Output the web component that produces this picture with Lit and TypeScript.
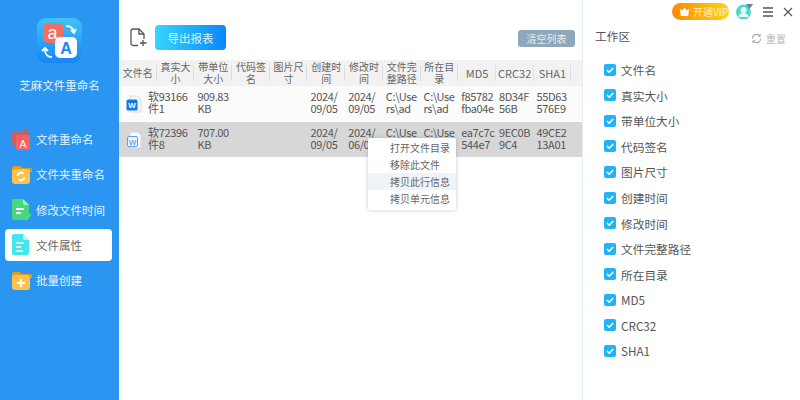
import { LitElement, html, css, svg } from "lit";
import { customElement } from "lit/decorators.js";

const headers = ["文件名","真实大小","带单位大小","代码签名","图片尺寸","创建时间","修改时间","文件完整路径","所在目录","MD5","CRC32","SHA1",""];
const rows = [
  { cls: "", name: "软93166\n件1", cells: ["909.83\nKB","","","2024/\n09/05","2024/\n09/05","C:\\Use\nrs\\ad","C:\\Use\nrs\\ad","f85782\nfba04e","8D34F\n56B","55D63\n576E9",""] },
  { cls: "sel", name: "软72396\n件8", cells: ["707.00\nKB","","","2024/\n09/05","2024/\n06/05","C:\\Use\nrs\\ad","C:\\Use\nrs\\ad","ea7c7c\n544e7","9EC0B\n9C4","49CE2\n13A01",""] },
];
const fields = ["文件名","真实大小","带单位大小","代码签名","图片尺寸","创建时间","修改时间","文件完整路径","所在目录","MD5","CRC32","SHA1"];

const navIcons = [
  svg`<rect x="1" y="3" width="15" height="15" rx="2" fill="#c9605f"/><path d="M11 2a6 6 0 0 1 7 4" stroke="#c9605f" fill="none" stroke-width="1.2"/><rect x="5" y="7" width="14" height="15" rx="2" fill="#f9615d"/><text x="12" y="20" font-size="11" fill="#fff" text-anchor="middle" font-family="Liberation Sans">A</text>`,
  svg`<path d="M1 5a2 2 0 0 1 2-2h6l2 2h8a2 2 0 0 1 2 2v2H1z" fill="#e89a1d"/><rect x="1" y="6" width="18" height="15" rx="3" fill="#ffc24a"/><path d="M6.500 13a3.500 3.500 0 0 1 6-2.400M13.500 14a3.500 3.500 0 0 1-6 2.400" stroke="#fff" stroke-width="1.800" fill="none"/>`,
  svg`<path d="M3 1h9l6 6v13a2 2 0 0 1-2 2H3a2 2 0 0 1-2-2V3a2 2 0 0 1 2-2z" fill="#47d77f"/><path d="M12 1l6 6h-4a2 2 0 0 1-2-2z" fill="#a5efc2"/><path d="M5 11h8M5 15h5" stroke="#fff" stroke-width="1.800"/><path d="M14 22l6-6" stroke="#4fd888" stroke-width="2"/>`,
  svg`<path d="M3 1h9l6 6v13a2 2 0 0 1-2 2H3a2 2 0 0 1-2-2V3a2 2 0 0 1 2-2z" fill="#43e6ee"/><path d="M12 1l6 6h-4a2 2 0 0 1-2-2z" fill="#b5f6f8"/><path d="M5 10h8M5 14h5M5 18h7" stroke="#fff" stroke-width="1.700"/>`,
  svg`<path d="M1 5a2 2 0 0 1 2-2h6l2 2h8a2 2 0 0 1 2 2v2H1z" fill="#e89a1d"/><rect x="1" y="6" width="18" height="15" rx="3" fill="#ffc24a"/><path d="M10 10v8M6 14h8" stroke="#fff" stroke-width="2"/>`,
];
const nav = ["文件重命名","文件夹重命名","修改文件时间","文件属性","批量创建"];

@customElement("app-root")
export class AppRoot extends LitElement {
  static styles = css`
    :host { display: block; width: 800px; height: 400px; overflow: hidden; background: #fff; color: #555;
      font-family: "Noto Sans CJK SC", "Open Sans", sans-serif; font-size: 11px; }
    .app { display: flex; width: 800px; height: 400px; }
    .side { width: 119px; flex: none; background: #2b96f1; display: flex; flex-direction: column; align-items: center; color: #e6f3ff; }
    .logo { margin-top: 18px; margin-left: -1px; width: 45px; height: 45px; display: block; }
    .brand { margin-top: 13px; font-size: 11.500px; line-height: 18px; }
    .nav { margin-top: 29px; width: 107px; align-self: flex-start; margin-left: 5px; display: flex; flex-direction: column; gap: 3.300px; }
    .item { height: 32px; border-radius: 4px; display: flex; align-items: center; gap: 4px; padding-left: 6px; font-size: 11.500px; }
    .item svg { width: 21px; height: 23px; flex: none; }
    .item.on { background: #fff; color: #666; }
    .main { width: 463px; flex: none; display: flex; flex-direction: column; position: relative; }
    .tools { height: 60px; display: flex; align-items: center; padding: 15px 7px 0 11px; box-sizing: border-box; }
    .addf { width: 17px; height: 19px; flex: none; }
    .export { margin-left: 8px; width: 71px; height: 25px; border-radius: 4px; background: linear-gradient(90deg, #37d6fb, #0a87fb); color: #d8f4ff;
      font-size: 11.500px; display: flex; align-items: center; justify-content: center; }
    .clear { margin-left: auto; width: 57px; height: 17px; border-radius: 3px; background: #8ea7bb; color: #e6edf3; font-size: 10px; display: flex;
      align-items: center; justify-content: center; margin-top: 1px; }
    .table { display: flex; flex-direction: column; }
    .hd, .row { display: grid; grid-template-columns: repeat(12, 37.700px) 1fr; }
    .hd { height: 26px; background: #f2f2f2; color: #666; }
    .hc { display: flex; align-items: center; justify-content: center; text-align: center; line-height: 12.500px; font-size: 10px; padding: 0 2px; box-sizing: border-box; position: relative; }
    .hc.lat { font-size: 11px; letter-spacing: 0; }
    .hc.bar::after { content: ""; position: absolute; right: 0; top: 5px; bottom: 5px; width: 1px; background: #dedede; }
    .row { height: 35px; background: #fbfbfb; align-items: center; color: #555; }
    .row.sel { background: #d7d7d7; }
    .c { white-space: pre; padding: 0 0 3px 3px; line-height: 12.500px; font-size: 11px; letter-spacing: -0.35px; }
    .namec { display: flex; align-items: center; padding-left: 7px; }
    .namec svg { width: 16px; height: 18px; flex: none; margin-right: 6px; }
    .nm { white-space: pre; line-height: 12.500px; font-size: 11px; letter-spacing: -0.35px; padding-bottom: 3px; }
    .gap { height: 1px; }
    .menu { position: absolute; left: 249px; top: 138px; width: 88px; background: #fff; border-radius: 2px; box-shadow: 0 0 4px rgba(80,100,130,.35); color: #666; padding: 1px 0 3px; }
    .mi { height: 17px; line-height: 17px; font-size: 10px; padding-left: 22px; }
    .mi.hl { background: #f0f4f8; }
    .right { flex: 1; border-left: 1px solid #e2f0fa; display: flex; flex-direction: column; position: relative; }
    .top { height: 23px; display: flex; align-items: center; justify-content: flex-end; padding-right: 7px; }
    .vip { width: 57px; height: 17px; border-radius: 9px; background: linear-gradient(90deg, #ff8a00, #ffd21c); color: #fff3cf; font-size: 10px;
      display: flex; align-items: center; gap: 3px; padding-left: 7px; box-sizing: border-box; margin-right: 7px; white-space: nowrap; }
    .vip svg { width: 11px; height: 11px; flex: none; }
    .ava { width: 17px; height: 17px; margin-right: 9px; }
    .menuic { width: 12px; height: 12px; margin-right: 9px; }
    .closeic { width: 10px; height: 10px; }
    .phead { display: flex; align-items: center; justify-content: space-between; padding: 0 14px 0 12px; height: 20px; margin-top: 4px; }
    .ptitle { font-size: 11.700px; color: #555; line-height: 18px; margin-top: -2px; }
    .reset { display: flex; align-items: center; gap: 4px; color: #bbb; font-size: 10px; margin-top: 3px; }
    .reset svg { width: 11px; height: 11px; }
    .list { margin-top: 10px; padding-left: 21px; display: flex; flex-direction: column; }
    .f { height: 25.560px; display: flex; align-items: center; gap: 5px; font-size: 11.700px; color: #555; }
    .cb { width: 12px; height: 12px; border-radius: 2px; background: #1eb4f5; display: flex; flex: none; }
    .cb svg { width: 12px; height: 12px; }
  `;

  render() {
    return html`<div class="app">
      <aside class="side">
        <svg class="logo" viewBox="0 0 45 45">
          <defs><linearGradient id="lg" x1="0" y1="0" x2="0" y2="1"><stop offset="0" stop-color="#3fc3f8"/><stop offset="1" stop-color="#1587f5"/></linearGradient></defs>
          <rect width="45" height="45" rx="9" fill="url(#lg)"/>
          <rect x="6" y="5" width="20" height="20" rx="5" fill="#f46e5f"/>
          <text x="15.500" y="21" font-size="18" fill="#fff" text-anchor="middle" font-family="Liberation Sans">a</text>
          <rect x="18" y="19" width="22" height="21" rx="5" fill="#fff"/>
          <text x="29" y="36" font-size="16" font-weight="bold" fill="#1a86f0" text-anchor="middle" font-family="Liberation Sans">A</text>
          <path d="M29 8c4 0 7 2 8 6M34 12l3 3 2-4" stroke="#fff" stroke-width="1.800" fill="none"/>
          <path d="M15 39c-4 0-7-2-7-7M5 33l3-3 3 3" stroke="#fff" stroke-width="1.800" fill="none"/>
        </svg>
        <div class="brand">芝麻文件重命名</div>
        <div class="nav">
          ${nav.map((n, i) => html`<div class="item ${i === 3 ? "on" : ""}"><svg viewBox="0 0 21 23">${navIcons[i]}</svg><span>${n}</span></div>`)}
        </div>
      </aside>
      <section class="main">
        <div class="tools">
          <svg class="addf" viewBox="0 0 17 19" fill="none" stroke="#555" stroke-width="1.300">
            <path d="M8 17.500H3a2 2 0 0 1-2-2V3a2 2 0 0 1 2-2h6l5 5v5"/><path d="M9 1v5h5"/><path d="M13 12v6M10 15h6.500"/>
          </svg>
          <div class="export">导出报表</div>
          <div class="clear">清空列表</div>
        </div>
        <div class="table">
          <div class="hd">${headers.map((h, i) => html`<div class="hc ${i < 12 ? "bar" : ""} ${i >= 9 ? "lat" : ""}">${h}</div>`)}</div>
          ${rows.map((r, i) => html`<div class="row ${r.cls}">
            <div class="namec" style="grid-column: span 2">
              ${i === 0
                ? html`<svg viewBox="0 0 16 18"><path d="M4 1h8l3 3v13H4z" fill="#f4f6fa" stroke="#d5dae3" stroke-width=".8"/><rect x="0.500" y="4.500" width="11" height="11" rx="1.500" fill="#1677e6"/><text x="6" y="13" font-size="8" font-weight="bold" fill="#fff" text-anchor="middle" font-family="Liberation Sans">W</text></svg>`
                : html`<svg viewBox="0 0 16 18"><path d="M4 1h8l3 3v13H4z" fill="#f7f9fc" stroke="#c9d2e0" stroke-width=".8"/><rect x="1.500" y="5.500" width="10" height="10" rx="1.500" fill="#eef4fd" stroke="#5b9df0"/><text x="6.500" y="13.500" font-size="8" fill="#3f86e6" text-anchor="middle" font-family="Liberation Sans">W</text></svg>`}
              <span class="nm">${r.name}</span>
            </div>
            ${r.cells.map((c) => html`<div class="c">${c}</div>`)}
          </div>${i === 0 ? html`<div class="gap"></div>` : ""}`)}
        </div>
        <div class="menu">
          <div class="mi">打开文件目录</div>
          <div class="mi">移除此文件</div>
          <div class="mi hl">拷贝此行信息</div>
          <div class="mi">拷贝单元信息</div>
        </div>
      </section>
      <section class="right">
        <div class="top">
          <div class="vip"><svg viewBox="0 0 12 12"><path d="M1 3l2.500 2L6 2l2.500 3L11 3l-1 8H2z" fill="#fff"/></svg>开通VIP</div>
          <svg class="ava" viewBox="0 0 17 17"><circle cx="7.500" cy="9" r="7.500" fill="#4fd6c4"/><circle cx="7.500" cy="7" r="3" fill="#e8fffb"/><path d="M2.500 14a5 4 0 0 1 10 0z" fill="#e8fffb"/><path d="M10 1h7l-3.500 5z" fill="#6d7f97"/></svg>
          <svg class="menuic" viewBox="0 0 12 12" stroke="#555" stroke-width="1.300"><path d="M1 2h10M1 6h10M1 10h10"/></svg>
          <svg class="closeic" viewBox="0 0 10 10" stroke="#555" stroke-width="1.100"><path d="M1 1l8 8M9 1l-8 8"/></svg>
        </div>
        <div class="phead">
          <span class="ptitle">工作区</span>
          <span class="reset"><svg viewBox="0 0 12 12" fill="none" stroke="#aaa" stroke-width="1.200"><path d="M1.500 6a4.500 4.500 0 0 1 8-2.800M10.500 6a4.500 4.500 0 0 1-8 2.800"/><path d="M9.800 1v2.500H7.300M2.200 11V8.500h2.500"/></svg>重置</span>
        </div>
        <div class="list">
          ${fields.map((f) => html`<div class="f"><span class="cb"><svg viewBox="0 0 12 12" fill="none" stroke="#fff" stroke-width="1.600"><path d="M3 6l2.200 2.200L9.200 4"/></svg></span>${f}</div>`)}
        </div>
      </section>
    </div>`;
  }
}
